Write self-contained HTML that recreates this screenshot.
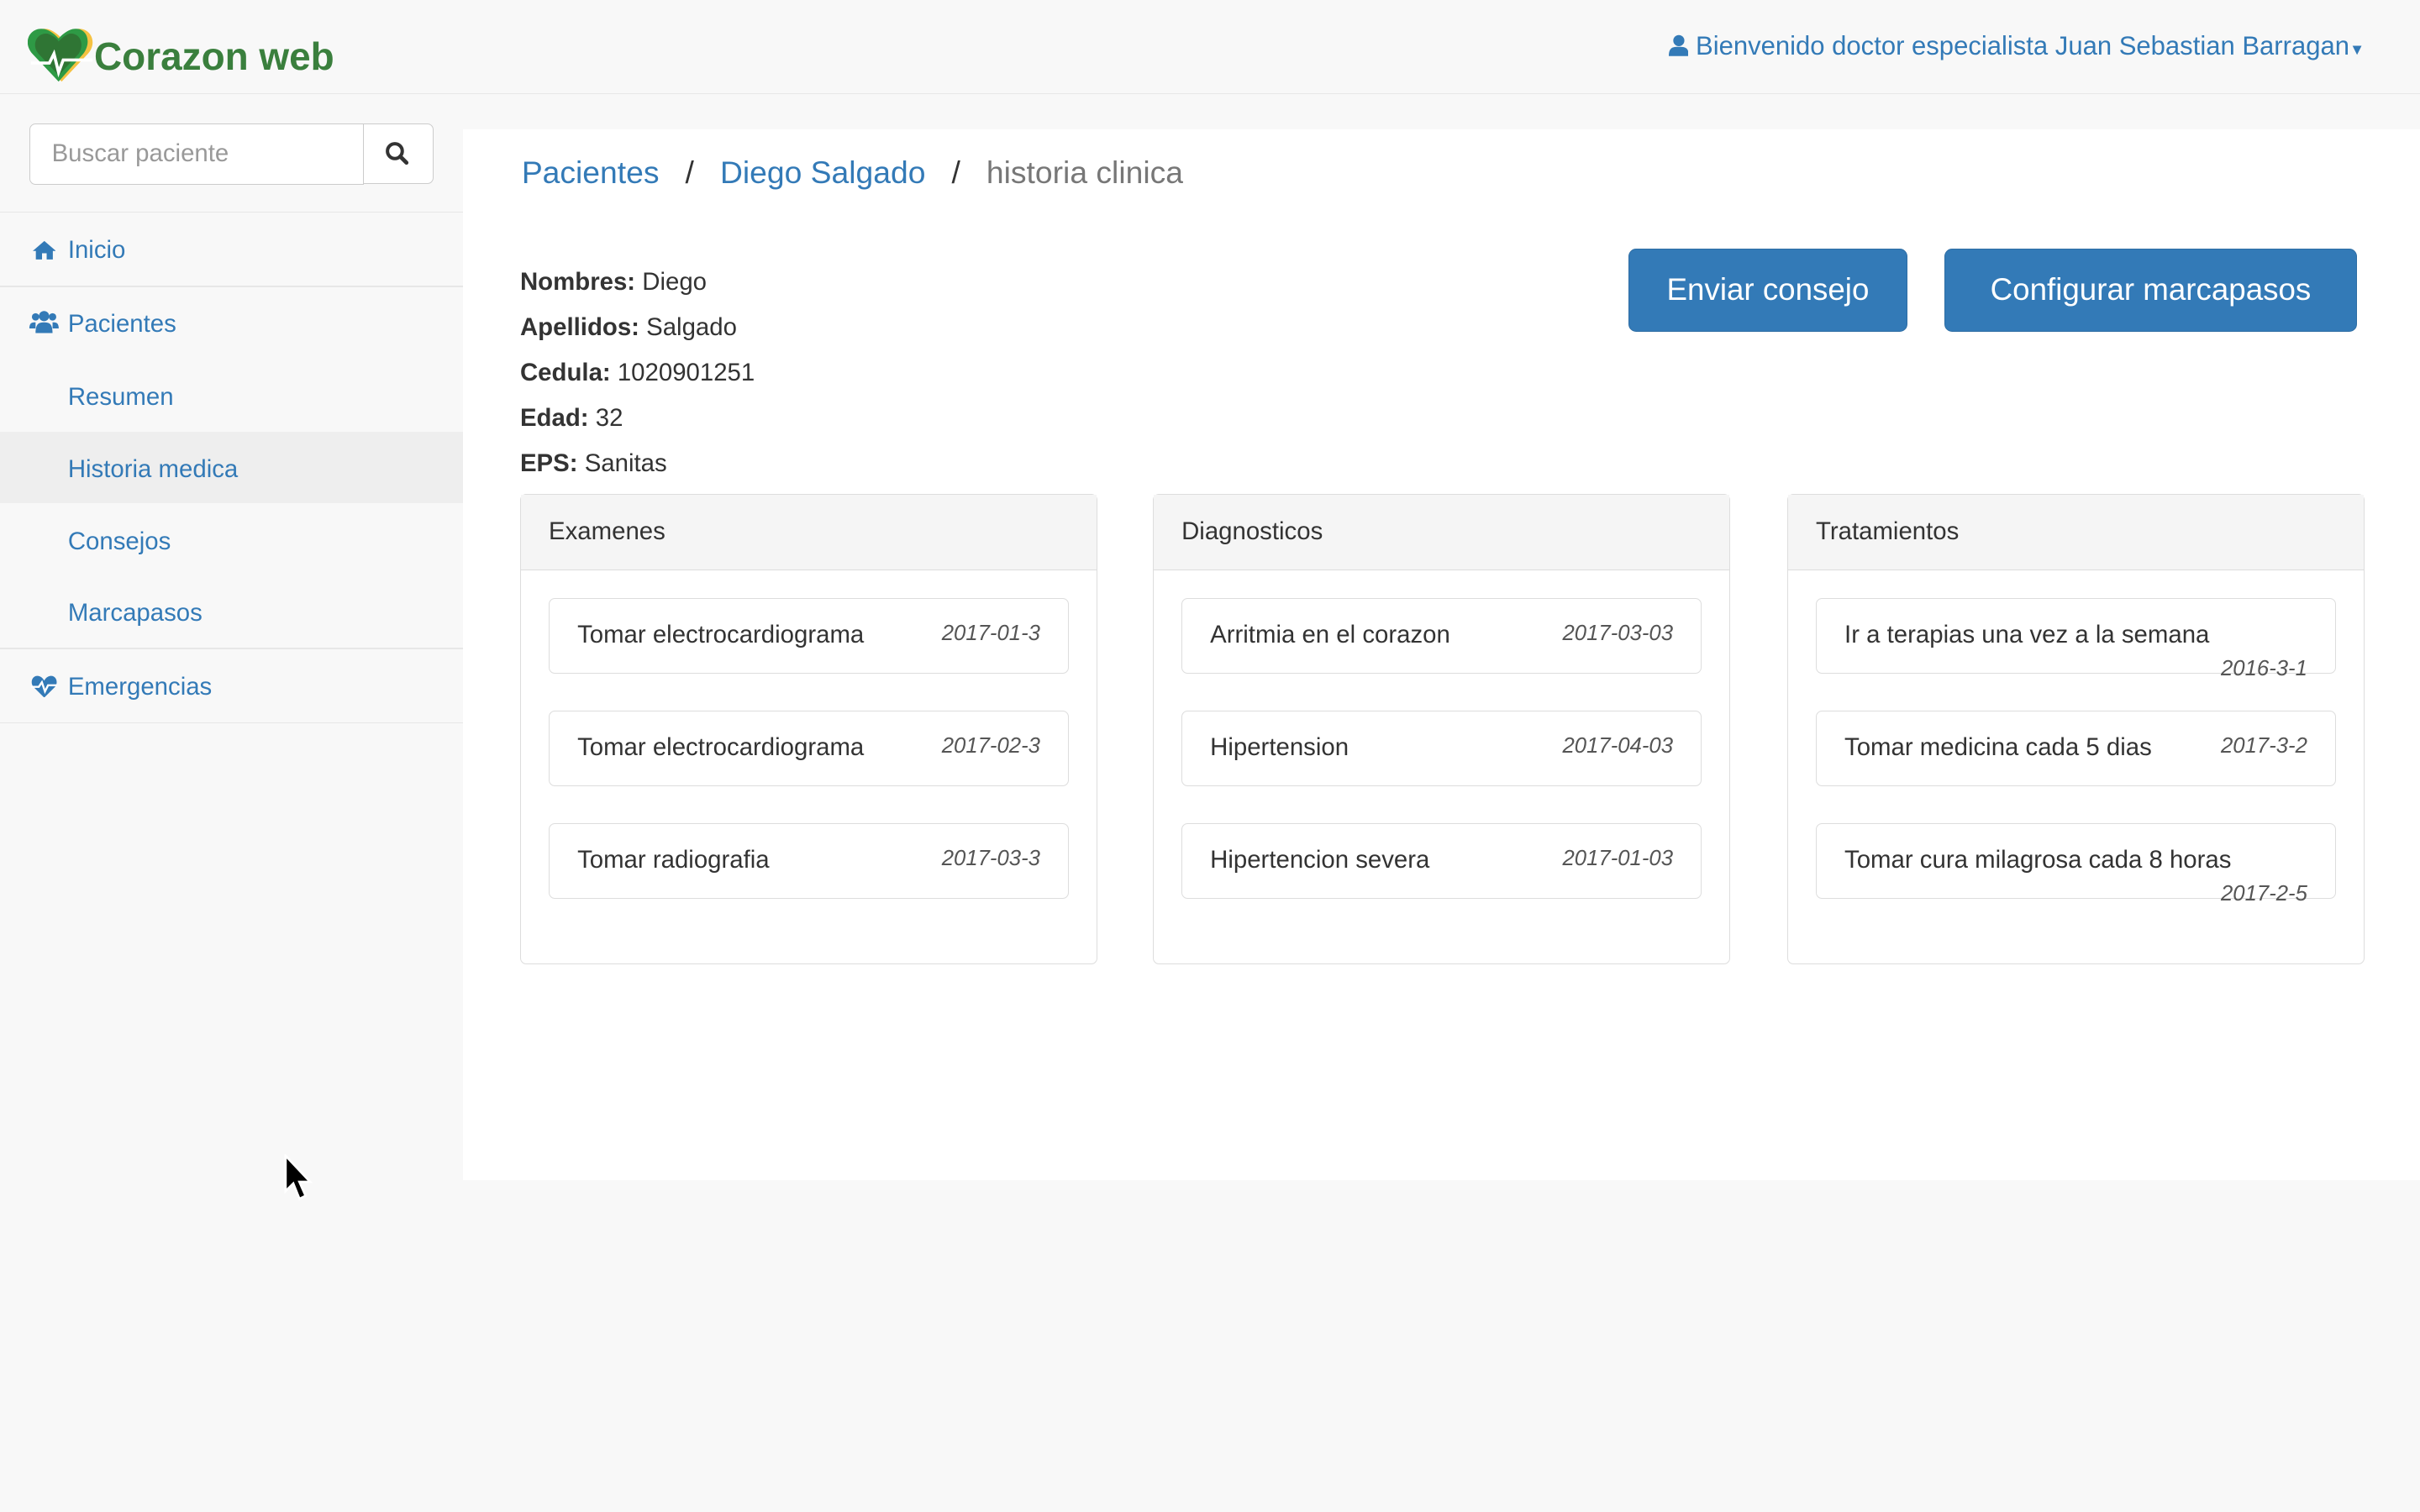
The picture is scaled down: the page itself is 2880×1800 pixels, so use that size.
<!DOCTYPE html>
<html><head><meta charset="utf-8"><style>
*{box-sizing:border-box;margin:0;padding:0}
html,body{width:2880px;height:1800px;overflow:hidden;background:#f8f8f8}
#w{width:1568px;height:980px;zoom:1.836735;position:relative;font-family:"Liberation Sans",sans-serif;color:#333;font-size:16px}
.a{position:absolute}
.nav{left:0;top:0;width:1568px;height:61px;border-bottom:1px solid #e7e7e7;background:#f8f8f8}
.blue{color:#337ab7}
.side a{position:absolute;left:44px;color:#337ab7;font-size:16px}
.hr{position:absolute;left:0;width:300px;height:1px;background:#e7e7e7}
.main{left:300px;top:84px;width:1268px;height:681px;background:#fff}
.btn{position:absolute;top:161px;height:54px;background:#337ab7;border:1px solid #2e6da4;border-radius:5px;color:#fff;font-size:20px;line-height:52px;text-align:center}
.pan{position:absolute;top:320px;width:374px;height:305px;border:1px solid #ddd;border-radius:4px;background:#fff}
.ph{height:49px;background:#f5f5f5;border-bottom:1px solid #ddd;padding-left:18px;line-height:48px;font-size:16px}
.it{position:absolute;left:18px;width:337px;height:49px;border:1px solid #ddd;border-radius:4px;padding-left:18px;line-height:47px;font-size:16px}
.it i{position:absolute;right:18px;top:-1px;font-size:14px;color:#555}
.it i.lo{top:22px}
</style></head><body><div id="w">
<div class="a nav"></div>
<svg class="a" style="left:18px;top:17px" width="44" height="38" viewBox="0 0 44 38">
<path d="M22 36 L5 18 C-2 10 4 0 13 2 C17 3 20 6 22 8 C24 6 27 3 31 2 C40 0 46 10 39 18 Z" fill="#f5c242"/>
<path d="M20 36 L3 18 C-4 10 2 0 11 2 C15 3 18 6 20 8 C22 6 25 3 29 2 C38 0 42 10 36 18 Z" fill="#2e9a45"/>
<path d="M20 32 L7 18 C2 12 6 4 13 5 C16 6 19 8 20 10 C22 8 24 6 27 5 C34 4 37 12 33 18 Z" fill="#2f6b30" opacity=".8"/>
<path d="M2 24 H14 L17 18 L20 30 L23 22 H42" stroke="#fff" stroke-width="2" fill="none"/>
</svg>
<div class="a" style="left:61px;top:22px;font-size:25px;font-weight:bold;color:#3a7f3d">Corazon web</div>
<div class="a blue" style="left:1081px;top:20px;font-size:16.9px"><svg width="13" height="14" viewBox="0 0 13 14" style="vertical-align:-1px"><circle cx="6.5" cy="4" r="3.6" fill="#337ab7"/><path d="M0 14 C0 8 3 8 6.5 8 C10 8 13 8 13 14Z" fill="#337ab7"/></svg> Bienvenido doctor especialista Juan Sebastian Barragan<span style="font-size:10px">&#9660;</span></div>
<div class="a" style="left:19px;top:80px;width:217px;height:40px;border:1px solid #ccc;border-radius:4px 0 0 4px;background:#fff;padding-left:14px;line-height:38px;color:#999">Buscar paciente</div>
<div class="a" style="left:235px;top:80px;width:46px;height:39px;border:1px solid #ccc;border-radius:0 4px 4px 0;background:#fff"><svg style="position:absolute;left:14px;top:11px" width="16" height="16" viewBox="0 0 16 16"><circle cx="6.5" cy="6.5" r="4.8" stroke="#333" stroke-width="2.2" fill="none"/><path d="M10 10 L14 14" stroke="#333" stroke-width="2.6" stroke-linecap="round"/></svg></div>
<div class="side">
<div class="hr" style="top:137px"></div>
<svg class="a" style="left:21px;top:155px" width="15" height="13" viewBox="0 0 15 13"><path d="M7.5 1 L0 7.5 H2 V13 H6 V9 H9 V13 H13 V7.5 H15Z" fill="#337ab7"/></svg>
<a style="top:153px">Inicio</a>
<div class="hr" style="top:185px"></div>
<svg class="a" style="left:19px;top:201px" width="19" height="15" viewBox="0 0 19 15"><circle cx="9.5" cy="4" r="3.3" fill="#337ab7"/><circle cx="4" cy="4.5" r="2.4" fill="#337ab7"/><circle cx="15" cy="4.5" r="2.4" fill="#337ab7"/><path d="M4 15 C4 9 6 8 9.5 8 C13 8 15 9 15 15Z M0 12 C0 8 2 8 4 8 L4 12Z M19 12 C19 8 17 8 15 8 L15 12Z" fill="#337ab7"/></svg>
<a style="top:201px">Pacientes</a>
<a style="top:248px">Resumen</a>
<div class="a" style="left:0;top:280px;width:300px;height:46px;background:#eee"></div>
<a style="top:295px">Historia medica</a>
<a style="top:342px">Consejos</a>
<a style="top:388px">Marcapasos</a>
<div class="hr" style="top:420px"></div>
<svg class="a" style="left:20px;top:437px" width="17" height="15" viewBox="0 0 17 15"><path d="M8.5 15 L1.5 8 C-1 5 1 0 5 1 C7 1.5 8 3 8.5 4 C9 3 10 1.5 12 1 C16 0 18 5 15.5 8Z" fill="#337ab7"/><path d="M0 8 H5 L7 5 L9 11 L11 7 H17" stroke="#fff" stroke-width="1.3" fill="none"/></svg>
<a style="top:436px">Emergencias</a>
<div class="hr" style="top:468px"></div>
</div>
<div class="a" style="left:300px;top:84px;width:1px;height:681px;background:#e7e7e7"></div>
<div class="a main"></div>
<div class="a" style="left:338px;top:100px;font-size:20.3px;color:#333"><span class="blue">Pacientes</span>&nbsp;&nbsp;&nbsp;/&nbsp;&nbsp;&nbsp;<span class="blue">Diego Salgado</span>&nbsp;&nbsp;&nbsp;/&nbsp;&nbsp;&nbsp;<span style="color:#777">historia clinica</span></div>
<div class="a" style="left:337px;top:168px;line-height:29.5px;font-size:16px">
<b>Nombres:</b> Diego<br><b>Apellidos:</b> Salgado<br><b>Cedula:</b> 1020901251<br><b>Edad:</b> 32<br><b>EPS:</b> Sanitas</div>
<div class="btn" style="left:1055px;width:181px">Enviar consejo</div>
<div class="btn" style="left:1260px;width:267px">Configurar marcapasos</div>
<div class="pan" style="left:337px"><div class="ph">Examenes</div>
<div class="it" style="top:67px">Tomar electrocardiograma<i>2017-01-3</i></div>
<div class="it" style="top:140px">Tomar electrocardiograma<i>2017-02-3</i></div>
<div class="it" style="top:213px">Tomar radiografia<i>2017-03-3</i></div></div>
<div class="pan" style="left:747px"><div class="ph">Diagnosticos</div>
<div class="it" style="top:67px">Arritmia en el corazon<i>2017-03-03</i></div>
<div class="it" style="top:140px">Hipertension<i>2017-04-03</i></div>
<div class="it" style="top:213px">Hipertencion severa<i>2017-01-03</i></div></div>
<div class="pan" style="left:1158px"><div class="ph">Tratamientos</div>
<div class="it" style="top:67px">Ir a terapias una vez a la semana<i class="lo">2016-3-1</i></div>
<div class="it" style="top:140px">Tomar medicina cada 5 dias<i>2017-3-2</i></div>
<div class="it" style="top:213px">Tomar cura milagrosa cada 8 horas<i class="lo">2017-2-5</i></div></div>
<svg class="a" style="left:184px;top:748px" width="20" height="32" viewBox="0 0 20 32"><path d="M1 1 V24 L6 19 L10 29 L14 27 L10 18 H17Z" fill="#000" stroke="#fff" stroke-width="1.5"/></svg>
</div></body></html>
